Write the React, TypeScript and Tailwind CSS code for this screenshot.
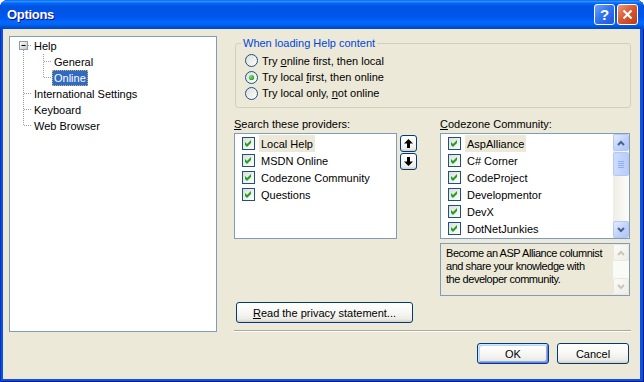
import React from 'react';

const ui = "font-['Liberation_Sans',Arial,sans-serif] text-[11px] leading-[14px] text-black";

const xpButton =
  'rounded-[3px] border border-[#003C74] bg-[linear-gradient(180deg,#FFFFFF_0%,#F7F7F4_50%,#ECEBE6_85%,#D6D0C5_100%)] flex items-center justify-center';

function CheckBox() {
  return (
    <svg width="13" height="13" viewBox="0 0 13 13" className="shrink-0">
      <defs>
        <linearGradient id="cb-fill" x1="0" y1="0" x2="1" y2="1">
          <stop offset="0" stopColor="#DCDCD7" />
          <stop offset="1" stopColor="#FFFFFF" />
        </linearGradient>
      </defs>
      <rect x="0.5" y="0.5" width="12" height="12" fill="url(#cb-fill)" stroke="#1C5180" />
      <path d="M3 5L5 7L9 3V6L5 10L3 8Z" fill="#21A121" />
    </svg>
  );
}

function Radio({ checked }: { checked?: boolean }) {
  return (
    <svg width="13" height="13" viewBox="0 0 13 13" className="shrink-0">
      <defs>
        <linearGradient id="rb-fill" x1="0" y1="0" x2="1" y2="1">
          <stop offset="0" stopColor="#DCDCD7" />
          <stop offset="1" stopColor="#FFFFFF" />
        </linearGradient>
        <radialGradient id="rb-dot" cx="0.35" cy="0.35" r="0.75">
          <stop offset="0" stopColor="#7BE277" />
          <stop offset="1" stopColor="#1A9A1A" />
        </radialGradient>
      </defs>
      <circle cx="6.5" cy="6.5" r="6" fill="url(#rb-fill)" stroke="#1C5180" />
      {checked && <circle cx="6.5" cy="6.5" r="2.6" fill="url(#rb-dot)" />}
    </svg>
  );
}

function Chevron({ up, color }: { up?: boolean; color: string }) {
  return (
    <svg width="8" height="6" viewBox="0 0 8 6">
      <path
        d={up ? 'M1 5L4 2L7 5' : 'M1 1L4 4L7 1'}
        fill="none"
        stroke={color}
        strokeWidth="2"
      />
    </svg>
  );
}

function ScrollButton({ up, disabled }: { up?: boolean; disabled?: boolean }) {
  return (
    <div
      className={`h-[17px] w-[16px] shrink-0 rounded-[2px] border flex items-center justify-center ${
        disabled
          ? 'border-[#E8E8DF] bg-[linear-gradient(135deg,#FBFBF9_0%,#EEEDE5_100%)]'
          : 'border-[#B4C8F6] bg-[linear-gradient(135deg,#E3ECFE_0%,#C3D4FD_50%,#B1C6F5_100%)]'
      }`}
    >
      <Chevron up={up} color={disabled ? '#C9C7BA' : '#4D6185'} />
    </div>
  );
}

function ScrollBar() {
  return (
    <div className="w-[16px] shrink-0 flex flex-col bg-[linear-gradient(90deg,#EEEDE5_0%,#FCFCFB_100%)]">
      <ScrollButton up />
      <div className="mt-[1px] h-[24px] rounded-[2px] border border-[#B4C8F6] bg-[linear-gradient(90deg,#CDDBFD_0%,#BACDF8_100%)] flex flex-col items-center justify-center gap-[1px]">
        <div className="w-[6px] h-[1px] bg-[#8CB0F8]" />
        <div className="w-[6px] h-[1px] bg-[#8CB0F8]" />
        <div className="w-[6px] h-[1px] bg-[#8CB0F8]" />
        <div className="w-[6px] h-[1px] bg-[#8CB0F8]" />
      </div>
      <div className="flex-1" />
      <ScrollButton />
    </div>
  );
}

function DisabledScrollBar() {
  return (
    <div className="w-[16px] shrink-0 flex flex-col bg-[#FAFAF7]">
      <ScrollButton up disabled />
      <div className="flex-1" />
      <ScrollButton disabled />
    </div>
  );
}

function ArrowButton({ up }: { up?: boolean }) {
  return (
    <div className={`w-[17px] h-[17px] ${xpButton}`}>
      <svg width="9" height="9" viewBox="0 0 9 9">
        <path
          d={up ? 'M4.5 0L9 4.5H6V9H3V4.5H0Z' : 'M4.5 9L9 4.5H6V0H3V4.5H0Z'}
          fill="#000"
        />
      </svg>
    </div>
  );
}

const dot = { stroke: '#A0A0A0', strokeDasharray: '1 1' };

function TreeRow({
  width,
  label,
  selected,
  children,
}: {
  width: number;
  label: string;
  selected?: boolean;
  children: React.ReactNode;
}) {
  return (
    <div className="h-[16px] flex items-center">
      <svg width={width} height="16" className="shrink-0">
        {children}
      </svg>
      <span
        className={`px-[1px] border leading-[14px] whitespace-nowrap ${
          selected
            ? 'bg-[#316AC5] text-white border-dotted border-[#C9B26A]'
            : 'border-transparent'
        }`}
      >
        {label}
      </span>
    </div>
  );
}

function Tree() {
  return (
    <div className="ml-[6px] mt-[7px] w-[208px] h-[296px] shrink-0 border border-[#7F9DB9] bg-white pt-[1px]">
      <TreeRow width={22} label="Help">
        <defs>
          <linearGradient id="tb-fill" x1="0" y1="0" x2="1" y2="1">
            <stop offset="0" stopColor="#FFFFFF" />
            <stop offset="1" stopColor="#C6C3B5" />
          </linearGradient>
        </defs>
        <line x1="13.5" y1="12" x2="13.5" y2="16" {...dot} />
        <line x1="18" y1="7.5" x2="22" y2="7.5" {...dot} />
        <rect x="9.5" y="3.5" width="8" height="8" fill="url(#tb-fill)" stroke="#8C9CB2" />
        <line x1="11.5" y1="7.5" x2="15.5" y2="7.5" stroke="#000" />
      </TreeRow>
      <TreeRow width={42} label="General">
        <line x1="13.5" y1="0" x2="13.5" y2="16" {...dot} />
        <line x1="33.5" y1="0" x2="33.5" y2="16" {...dot} />
        <line x1="34" y1="7.5" x2="42" y2="7.5" {...dot} />
      </TreeRow>
      <TreeRow width={42} label="Online" selected>
        <line x1="13.5" y1="0" x2="13.5" y2="16" {...dot} />
        <line x1="33.5" y1="0" x2="33.5" y2="8" {...dot} />
        <line x1="34" y1="7.5" x2="42" y2="7.5" {...dot} />
      </TreeRow>
      <TreeRow width={22} label="International Settings">
        <line x1="13.5" y1="0" x2="13.5" y2="16" {...dot} />
        <line x1="14" y1="7.5" x2="22" y2="7.5" {...dot} />
      </TreeRow>
      <TreeRow width={22} label="Keyboard">
        <line x1="13.5" y1="0" x2="13.5" y2="16" {...dot} />
        <line x1="14" y1="7.5" x2="22" y2="7.5" {...dot} />
      </TreeRow>
      <TreeRow width={22} label="Web Browser">
        <line x1="13.5" y1="0" x2="13.5" y2="8" {...dot} />
        <line x1="14" y1="7.5" x2="22" y2="7.5" {...dot} />
      </TreeRow>
    </div>
  );
}

function CheckItem({ label, active }: { label: string; active?: boolean }) {
  return (
    <div className="h-[17px] flex items-center shrink-0">
      <CheckBox />
      <span
        className={`ml-[4px] px-[2px] h-[17px] flex items-center whitespace-nowrap ${
          active ? 'bg-[#ECE9D8]' : ''
        }`}
      >
        {label}
      </span>
    </div>
  );
}

function RadioRow({ checked, h, children }: { checked?: boolean; h: string; children: React.ReactNode }) {
  return (
    <div className={`${h} flex items-center gap-[4px]`}>
      <Radio checked={checked} />
      <span className="whitespace-nowrap">{children}</span>
    </div>
  );
}

const providers = ['Local Help', 'MSDN Online', 'Codezone Community', 'Questions'];
const community = ['AspAlliance', 'C# Corner', 'CodeProject', 'Developmentor', 'DevX', 'DotNetJunkies'];
const blurb = ['Become an ASP Alliance columnist', 'and share your knowledge with', 'the developer community.'];

export default function App() {
  return (
    <div
      className={`w-[644px] h-[382px] flex flex-col rounded-t-[8px] overflow-hidden bg-[#0855DD] shadow-[inset_1px_0_0_#0A2FC8,inset_-1px_0_0_#00138C,inset_0_-1px_0_#00138C] ${ui}`}
    >
      {/* title bar */}
      <div className="h-[29px] shrink-0 flex items-center pl-[7px] pr-[6px] bg-[linear-gradient(180deg,#0058EE_0%,#3593FF_4%,#288EFF_6%,#127DFF_8%,#036FFC_10%,#0262EE_14%,#0057E5_20%,#0054E3_24%,#0055EB_56%,#005BF5_66%,#026AFE_76%,#0062EF_86%,#0052D6_92%,#0046C8_100%)]">
        <span className="font-bold text-[13px] leading-[16px] text-white tracking-[-0.3px] [text-shadow:1px_1px_0_#0F1089]">
          Options
        </span>
        <div className="ml-auto flex gap-[2px]">
          <div className="w-[21px] h-[21px] rounded-[3px] border border-white bg-[linear-gradient(135deg,#6BA4FE_0%,#3574F0_45%,#1F56DA_100%)] flex items-center justify-center">
            <span className="font-bold text-[15px] leading-[15px] text-white">?</span>
          </div>
          <div className="w-[21px] h-[21px] rounded-[3px] border border-white bg-[linear-gradient(135deg,#EE9A7E_0%,#DA5A34_45%,#BD3A15_100%)] flex items-center justify-center">
            <svg width="11" height="11" viewBox="0 0 11 11">
              <path d="M1.5 1.5L9.5 9.5M9.5 1.5L1.5 9.5" stroke="#FFFFFF" strokeWidth="2.2" />
            </svg>
          </div>
        </div>
      </div>

      {/* body */}
      <div className="flex-1 ml-[3px] mr-[4px] mb-[3px] bg-[#ECE9D8] flex items-start">
        <Tree />

        <div className="ml-[17px] w-[397px] pt-[7px] flex flex-col">
          <fieldset className="ml-[1px] w-[396px] border border-[#D0D0BF] rounded-[3px] pb-[6px]">
            <legend className="ml-[5px] px-[2px] text-[#0046D5] leading-[14px]">
              When loading Help content
            </legend>
            <div className="mt-[2px] pl-[9px] flex flex-col">
              <RadioRow h="h-[17px]">
                Try <span className="underline">o</span>nline first, then local
              </RadioRow>
              <RadioRow h="h-[16px]" checked>
                Try local <span className="underline">f</span>irst, then online
              </RadioRow>
              <RadioRow h="h-[16px]">
                Try local only, <span className="underline">n</span>ot online
              </RadioRow>
            </div>
          </fieldset>

          <div className="mt-[9px] flex items-start">
            <div className="flex flex-col">
              <div className="h-[14px] mb-[2px] whitespace-nowrap">
                <span className="underline">S</span>earch these providers:
              </div>
              <div className="flex items-start">
                <div className="w-[163px] h-[106px] border border-[#7F9DB9] bg-white pl-[7px] pt-[1px] flex flex-col">
                  {providers.map((p, i) => (
                    <CheckItem key={p} label={p} active={i === 0} />
                  ))}
                </div>
                <div className="ml-[3px] mt-[2px] flex flex-col gap-[1px]">
                  <ArrowButton up />
                  <ArrowButton />
                </div>
              </div>
            </div>

            <div className="ml-[23px] w-[190px] flex flex-col">
              <div className="h-[14px] mb-[2px] whitespace-nowrap">
                <span className="underline">C</span>odezone Community:
              </div>
              <div className="h-[106px] border border-[#7F9DB9] bg-white flex">
                <div className="flex-1 pl-[7px] pt-[1px] flex flex-col overflow-hidden">
                  {community.map((c, i) => (
                    <CheckItem key={c} label={c} active={i === 0} />
                  ))}
                </div>
                <ScrollBar />
              </div>
              <div className="mt-[4px] h-[53px] border border-[#7F9DB9] bg-[#ECE9D8] flex">
                <div className="flex-1 min-w-0 pl-[5px] pt-[3px] flex flex-col">
                  {blurb.map((line) => (
                    <span key={line} className="h-[13px] leading-[13px] tracking-[-0.45px] whitespace-nowrap">
                      {line}
                    </span>
                  ))}
                </div>
                <DisabledScrollBar />
              </div>
            </div>
          </div>

          <div className={`mt-[6px] ml-[2px] w-[177px] h-[21px] ${xpButton}`}>
            <span>
              <span className="underline">R</span>ead the privacy statement...
            </span>
          </div>

          <div className="mt-[7px] h-[2px] border-t border-[#ACA899] border-b border-b-white" />

          <div className="mt-[11px] pr-[2px] flex justify-end gap-[8px]">
            <div
              className={`w-[72px] h-[21px] ${xpButton} shadow-[inset_1px_1px_0_#CEE7FF,inset_-1px_-1px_0_#6982EE,inset_2px_2px_0_#BCD4F6,inset_-2px_-2px_0_#89ADE4]`}
            >
              OK
            </div>
            <div className={`w-[72px] h-[21px] ${xpButton}`}>Cancel</div>
          </div>
        </div>
      </div>
    </div>
  );
}
